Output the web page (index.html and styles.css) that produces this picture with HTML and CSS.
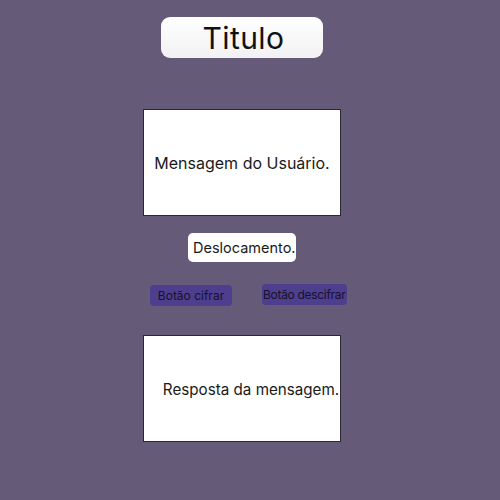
FILE: index.html
```html
<!DOCTYPE html>
<html lang="pt">
<head>
<meta charset="utf-8">
<title>Cifra</title>
<link rel="stylesheet" href="styles.css">
</head>
<body>
<main class="page">
  <h1 class="title">Titulo</h1>
  <div class="box box-msg"><span class="box-text">Mensagem do Usuário.</span></div>
  <div class="shift">Deslocamento.</div>
  <div class="actions">
    <button class="btn btn-cifrar">Botão cifrar</button>
    <button class="btn btn-descifrar">Botão descifrar</button>
  </div>
  <div class="box box-resp"><span class="box-text resp-text">Resposta da mensagem.</span></div>
</main>
</body>
</html>
```

FILE: styles.css
```css
html, body {
  margin: 0;
  padding: 0;
  background: #655a78;
  font-family: Inter, "Noto Sans", sans-serif;
}
.page {
  width: 484px;
  height: 500px;
  display: flex;
  flex-direction: column;
  align-items: center;
  padding-top: 17px;
  box-sizing: border-box;
}
.title {
  margin: 0;
  width: 162px;
  height: 41px;
  border-radius: 9px;
  background: linear-gradient(#ffffff, #f2f1f3);
  display: flex;
  align-items: center;
  justify-content: center;
  font-size: 30px;
  font-weight: 400;
  color: #111;
  letter-spacing: 0.4px;
  padding-left: 3px;
  box-sizing: border-box;
}
.box {
  width: 198px;
  height: 107px;
  box-sizing: border-box;
  background: #fff;
  border: 1.5px solid #2b2735;
  display: flex;
  align-items: center;
  justify-content: center;
  color: #1a1a1a;
  font-size: 16px;
}
.box-msg {
  margin-top: 51px;
}
.box-text {
  padding-top: 1px;
  white-space: nowrap;
}
.resp-text {
  padding-left: 18px;
  font-size: 15.2px;
}
.shift {
  margin-top: 17px;
  width: 108px;
  height: 29px;
  box-sizing: border-box;
  background: #fff;
  border-radius: 5px;
  display: flex;
  align-items: center;
  padding-left: 5px;
  font-size: 14.5px;
  color: #1a1a1a;
  white-space: nowrap;
}
.actions {
  margin-top: 23px;
  display: flex;
  gap: 30px;
  margin-left: 13px;
}
.btn {
  border: none;
  height: 21px;
  padding: 0 6px;
  border-radius: 4px;
  background: #4d3f8e;
  color: #17122c;
  font-family: Inter, "Noto Sans", sans-serif;
  font-size: 12px;
  display: flex;
  align-items: center;
  white-space: nowrap;
  overflow: visible;
}
.btn-cifrar {
  width: 82px;
  justify-content: center;
}
.btn-descifrar {
  width: 85px;
  padding: 0 1px;
  margin-top: -1px;
  letter-spacing: -0.3px;
}
.box-resp {
  margin-top: 29px;
}
```
